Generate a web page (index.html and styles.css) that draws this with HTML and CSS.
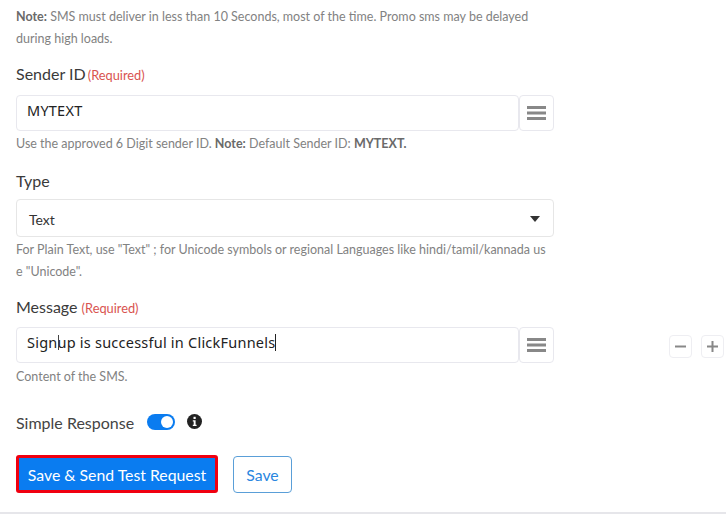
FILE: index.html
```html
<!DOCTYPE html>
<html>
<head>
  <meta charset="UTF-8" />
  <title>SMS action</title>
  <link rel="stylesheet" href="styles.css">
</head>
<body>
  <div class="form">
    <p class="help first"><b>Note:</b> SMS must deliver in less than 10 Seconds, most of the time. Promo sms may be delayed during high loads.</p>

    <label class="label sender-label">Sender ID <span class="required">(Required)</span></label>
    <div class="input-row">
      <div class="input">MYTEXT</div>
      <div class="menu-btn">
        <svg width="20" height="14" viewBox="0 0 20 14"><path d="M0 1.5h19M0 7h19M0 12.500h19" stroke="#888" stroke-width="2.800"/></svg>
      </div>
    </div>
    <p class="help">Use the approved 6 Digit sender ID. <b>Note:</b> Default Sender ID: <b>MYTEXT.</b></p>

    <label class="label type-label">Type</label>
    <div class="select">
      <span>Text</span>
      <svg width="10" height="6" viewBox="0 0 10 6"><path d="M0 0h10L5 6z" fill="#333"/></svg>
    </div>
    <p class="help">For Plain Text, use "Text" ; for Unicode symbols or regional Languages like hindi/tamil/kannada us<br>e "Unicode".</p>

    <label class="label message-label">Message <span class="required">(Required)</span></label>
    <div class="message-row">
      <div class="input-row">
        <div class="input">Sign<span class="ibeam"></span>up is successful in ClickFunnels<span class="caret"></span></div>
        <div class="menu-btn">
          <svg width="20" height="14" viewBox="0 0 20 14"><path d="M0 1.5h19M0 7h19M0 12.500h19" stroke="#888" stroke-width="2.800"/></svg>
        </div>
      </div>
      <div class="step-btns">
        <div class="step-btn"><svg width="11" height="11" viewBox="0 0 11 11"><path d="M0 5.500h11" stroke="#888" stroke-width="2"/></svg></div>
        <div class="step-btn"><svg width="11" height="11" viewBox="0 0 11 11"><path d="M0 5.500h11M5.500 0v11" stroke="#888" stroke-width="2"/></svg></div>
      </div>
    </div>
    <p class="help">Content of the SMS.</p>

    <div class="response-row">
      <span>Simple Response</span>
      <span class="toggle"></span>
      <svg class="info" width="15" height="15" viewBox="0 0 15 15"><circle cx="7.500" cy="7.500" r="7.500" fill="#222"/><rect x="6.500" y="2.800" width="2.200" height="2.200" fill="#fff"/><path d="M5.800 6.300h2.800v4.400h1v1.200H5.800v-1.200h.9V7.500h-.9z" fill="#fff"/></svg>
    </div>

    <div class="actions">
      <button class="btn-primary">Save &amp; Send Test Request</button>
      <button class="btn-outline">Save</button>
    </div>
  </div>
</body>
</html>
```
FILE: styles.css
```css
* {
  margin: 0;
  padding: 0;
  box-sizing: border-box;
}
body {
  height: 515px;
  overflow: hidden;
  background: white;
  font-family: "Lato", "Noto Sans", sans-serif;
  color: #333;
}
.form {
  height: 514px;
  padding: 6px 2px 0 16px;
  border-bottom: 2px solid #e6e6ea;
}
.help {
  width: 538px;
  font-size: 12.500px;
  line-height: 22px;
  color: #828282;
  word-break: break-all;
}
.help.first {
  word-break: normal;
}
.help b {
  color: #6a6a6a;
}
.label {
  display: block;
  font-size: 16px;
  line-height: 20px;
  color: #3a3a3a;
}
.sender-label {
  margin-top: 14px;
  margin-bottom: 10px;
}
.sender-label .required {
  margin-left: -2px;
}
.type-label {
  margin-top: 16px;
  margin-bottom: 8px;
}
.message-label {
  margin-top: 14px;
  margin-bottom: 9px;
}
.required {
  font-size: 12.800px;
  color: #d9534f;
}
.input-row {
  display: flex;
  width: 538px;
  margin-bottom: 2px;
}
.input {
  position: relative;
  flex: 1;
  height: 36px;
  padding-left: 10px;
  border: 1px solid #e8e8ee;
  border-radius: 4px;
  font-family: "Noto Sans", sans-serif;
  font-size: 14.500px;
  letter-spacing: 0.23px;
  line-height: 28px;
  color: #222;
}
.ibeam {
  position: absolute;
  left: 41px;
  top: 7px;
  width: 1px;
  height: 15px;
  background: #444;
}
.caret {
  display: inline-block;
  width: 1px;
  height: 17px;
  background: #222;
  vertical-align: -3px;
}
.menu-btn {
  width: 35px;
  height: 36px;
  display: flex;
  align-items: center;
  justify-content: center;
  border: 1px solid #e8e8ee;
  border-radius: 4px;
}
.select {
  width: 538px;
  height: 38px;
  display: flex;
  align-items: center;
  justify-content: space-between;
  padding: 2px 13px 0 12px;
  margin-bottom: 2px;
  border: 1px solid #e6e6e6;
  border-radius: 4px;
  font-size: 14px;
  color: #333;
}
.message-row {
  display: flex;
  justify-content: space-between;
  align-items: center;
  margin-bottom: 1px;
}
.step-btns {
  display: flex;
  gap: 9px;
}
.step-btn {
  width: 23px;
  height: 23px;
  display: flex;
  align-items: center;
  justify-content: center;
  border: 1px solid #eeeef2;
  border-radius: 4px;
}
.response-row {
  display: flex;
  align-items: center;
  margin-top: 24px;
  height: 20px;
  font-size: 16px;
  color: #444;
}
.toggle {
  position: relative;
  width: 28px;
  height: 16px;
  margin-left: 13px;
  border-radius: 8px;
  background: #0a7cf0;
}
.toggle::after {
  content: "";
  position: absolute;
  top: 2px;
  right: 2px;
  width: 12px;
  height: 12px;
  border-radius: 50%;
  background: white;
}
.info {
  margin-left: 12px;
  margin-top: -2px;
}
.actions {
  display: flex;
  align-items: center;
  gap: 15px;
  margin-top: 23px;
}
.actions button {
  font-family: inherit;
  font-size: 15.800px;
  border-radius: 4px;
  height: 37px;
}
.actions .btn-primary {
  width: 202px;
  height: 38px;
  border: 3px solid #f00010;
  border-radius: 3px;
  background: #0a7cf0;
  color: white;
}
.btn-outline {
  width: 59px;
  border: 1px solid #5a9fd8;
  background: white;
  color: #2a86e0;
}
```
